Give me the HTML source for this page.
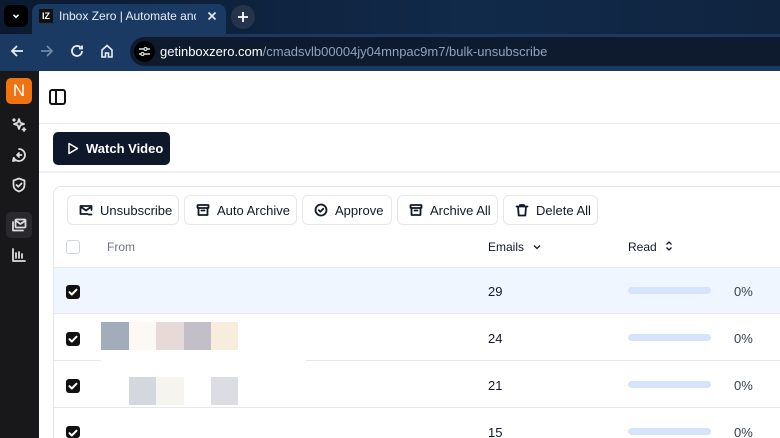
<!DOCTYPE html>
<html><head><meta charset="utf-8"><style>
*{box-sizing:border-box;margin:0;padding:0}
html,body{width:780px;height:438px;overflow:hidden}
body{font-family:"Liberation Sans",sans-serif;background:#fff;position:relative}
.abs{position:absolute}
.btn{position:absolute;top:195px;height:30px;border:1px solid #e5e7eb;border-radius:6px;font-size:13px;color:#111827;display:flex;align-items:center;padding-left:11px;gap:7px;background:#fff}
.btn svg{width:14px;height:14px;fill:none;stroke:#111827;stroke-width:1.8;stroke-linecap:round;stroke-linejoin:round}
.cb{position:absolute;left:66px;width:14px;height:14px;border-radius:3px;background:#111}
.row{position:absolute;left:54px;right:0;height:47px;border-bottom:1px solid #e5e7eb}
.num{position:absolute;left:488px;font-size:13px;color:#111827}
.bar{position:absolute;left:628px;width:83px;height:7px;border-radius:4px;background:#d6e4fb}
.pct{position:absolute;left:734px;font-size:13px;color:#374151}
.si{position:absolute;left:11px;width:16px;height:16px;fill:none;stroke:#ddd;stroke-width:1.8;stroke-linecap:round;stroke-linejoin:round}
</style></head><body>
<svg width="0" height="0" style="position:absolute"><defs><symbol id="ck" viewBox="0 0 14 14"><path d="M3.5 7.2l2.3 2.3 4.7-4.8" fill="none" stroke="#fff" stroke-width="2" stroke-linecap="round" stroke-linejoin="round"/></symbol></defs></svg>
<div class="abs" style="left:0;top:0;width:780px;height:34px;background:linear-gradient(90deg,#0b1a30,#112a4a 60%,#10243f)"></div>
<div class="abs" style="left:4px;top:5px;width:24px;height:22px;border-radius:6px;background:#000"></div>
<svg class="abs" style="left:11px;top:11px" width="10" height="10" viewBox="0 0 10 10"><path d="M2.5 3.8L5 6.3 7.5 3.8" fill="none" stroke="#fff" stroke-width="1.6"/></svg>
<div class="abs" style="left:32px;top:4px;width:194px;height:30px;background:#1a3a63;border-radius:8px 8px 0 0"></div>
<div class="abs" style="left:39px;top:9px;width:14px;height:14px;background:#111;color:#fff;font-size:9px;font-weight:bold;line-height:14px;text-align:center">IZ</div>
<div class="abs" style="left:59px;top:9px;font-size:12px;color:#e8eef7;width:137px;overflow:hidden;white-space:nowrap">Inbox Zero | Automate and clea</div>
<svg class="abs" style="left:207px;top:11px" width="10" height="10" viewBox="0 0 10 10"><path d="M1.5 1.5l7 7M8.5 1.5l-7 7" stroke="#e8eef7" stroke-width="1.6"/></svg>
<div class="abs" style="left:231px;top:5px;width:24px;height:24px;border-radius:12px;background:#25344a"></div>
<svg class="abs" style="left:237px;top:11px" width="12" height="12" viewBox="0 0 12 12"><path d="M6 1v10M1 6h10" stroke="#fff" stroke-width="1.8"/></svg>
<div class="abs" style="left:0;top:34px;width:780px;height:37px;background:#1a3a63"></div>
<svg class="abs" style="left:10px;top:44px" width="14" height="14" viewBox="0 0 14 14"><path d="M13 7H2M7 2L2 7l5 5" fill="none" stroke="#e8eef7" stroke-width="1.8"/></svg>
<svg class="abs" style="left:40px;top:44px" width="14" height="14" viewBox="0 0 14 14"><path d="M1 7h11M7 2l5 5-5 5" fill="none" stroke="#6f87a8" stroke-width="1.8"/></svg>
<svg class="abs" style="left:70px;top:44px" width="14" height="14" viewBox="0 0 14 14"><path d="M12 7a5 5 0 1 1-1.5-3.6M12 1.5V4.5H9" fill="none" stroke="#e8eef7" stroke-width="1.8"/></svg>
<svg class="abs" style="left:100px;top:44px" width="14" height="14" viewBox="0 0 14 14"><path d="M2 13V6l5-4.5L12 6v7H8.5V9h-3v4z" fill="none" stroke="#e8eef7" stroke-width="1.6"/></svg>
<div class="abs" style="left:130px;top:37px;width:650px;height:29px;border-radius:15px 0 0 15px;background:#0e1b2e"></div>
<div class="abs" style="left:134px;top:41px;width:21px;height:21px;border-radius:11px;background:#000"></div>
<svg class="abs" style="left:138px;top:45px" width="13" height="13" viewBox="0 0 13 13"><path d="M1 4h5M9 4h3M1 9h2M6 9h6" stroke="#ddd" stroke-width="1.4"/><circle cx="7.5" cy="4" r="1.5" fill="none" stroke="#ddd" stroke-width="1.3"/><circle cx="4.5" cy="9" r="1.5" fill="none" stroke="#ddd" stroke-width="1.3"/></svg>
<div class="abs" style="left:160px;top:44px;font-size:13px;color:#fff;white-space:nowrap">getinboxzero.com<span style="color:#8fa3bf">/cmadsvlb00004jy04mnpac9m7/bulk-unsubscribe</span></div>
<div class="abs" style="left:0;top:71px;width:39px;height:367px;background:#18181b"></div>
<div class="abs" style="left:6px;top:78px;width:26px;height:26px;border-radius:5px;background:#f07312;color:#fff;font-size:17px;text-align:center;line-height:26px">N</div>
<svg class="si" style="top:117px" viewBox="0 0 16 16"><path d="M8 2l1.3 3.7L13 7l-3.7 1.3L8 12 6.7 8.3 3 7l3.7-1.3zM13 11v3M11.5 12.5h3M3 2v2M2 3h2"/></svg>
<svg class="si" style="top:147px" viewBox="0 0 16 16"><path d="M8 2a6 6 0 1 1-5.3 8.8L2 14l3.2-.7A6 6 0 0 0 8 14"/><path d="M6 8l2-2M6 8l2 2M6 8h4.5"/></svg>
<svg class="si" style="top:177px" viewBox="0 0 16 16"><path d="M8 1.5l5.5 2v4.5c0 3.5-2.5 5.5-5.5 6.5C5 13.5 2.5 11.5 2.5 8V3.5z"/><path d="M5.5 8l1.8 1.8L10.5 6.5"/></svg>
<div class="abs" style="left:6px;top:212px;width:26px;height:26px;border-radius:5px;background:#2a2a2e"></div>
<svg class="si" style="top:217px" viewBox="0 0 16 16"><rect x="4.5" y="2.5" width="10" height="8" rx="1"/><path d="M4.5 3.5l5 3.5 5-3.5M2 5v8.5h10"/></svg>
<svg class="si" style="top:247px" viewBox="0 0 16 16"><path d="M2 2v12h12M5 11V6M8 11V5M11 11V7"/></svg>
<div class="abs" style="left:49px;top:89px;width:17px;height:16px;border:2px solid #111;border-radius:3px"></div>
<div class="abs" style="left:55px;top:89px;width:2px;height:16px;background:#111"></div>
<div class="abs" style="left:39px;top:123px;width:741px;height:1px;background:#e5e7eb"></div>
<div class="abs" style="left:53px;top:132px;width:117px;height:33px;border-radius:5px;background:#0f172a"></div>
<svg class="abs" style="left:67px;top:142px" width="12" height="13" viewBox="0 0 12 13"><path d="M2 1.5l8.5 5-8.5 5z" fill="none" stroke="#fff" stroke-width="1.5" stroke-linejoin="round"/></svg>
<div class="abs" style="left:86px;top:141px;color:#fff;font-size:13px;font-weight:bold">Watch Video</div>
<div class="abs" style="left:39px;top:171px;width:741px;height:2px;background:#eef0f3"></div>
<div class="abs" style="left:53px;top:186px;width:727px;height:252px;border:1px solid #e5e7eb;border-right:none;border-bottom:none;border-radius:8px 0 0 0"></div>
<div class="btn" style="left:67px;width:112px"><svg viewBox="0 0 14 14"><path d="M12.5 7V3H1.5v8h7M1.5 3.5L7 7.5l5.5-4M9.5 11.5h3"/></svg>Unsubscribe</div>
<div class="btn" style="left:184px;width:113px"><svg viewBox="0 0 14 14"><rect x="1.5" y="2" width="11" height="3" rx=".5"/><path d="M2.5 5v7h9V5M5.5 7.5h3"/></svg>Auto Archive</div>
<div class="btn" style="left:302px;width:90px"><svg viewBox="0 0 14 14"><circle cx="7" cy="7" r="5.5"/><path d="M4.8 7.2l1.5 1.5 3-3"/></svg>Approve</div>
<div class="btn" style="left:397px;width:101px"><svg viewBox="0 0 14 14"><rect x="1.5" y="2" width="11" height="3" rx=".5"/><path d="M2.5 5v7h9V5M5.5 7.5h3"/></svg>Archive All</div>
<div class="btn" style="left:503px;width:95px"><svg viewBox="0 0 14 14"><path d="M1.5 3.5h11M5 3.5V2h4v1.5M3 3.5l.7 9h6.6l.7-9"/></svg>Delete All</div>
<div class="abs" style="left:66px;top:240px;width:14px;height:14px;border:1px solid #d1d5db;border-radius:3px"></div>
<div class="abs" style="left:107px;top:240px;font-size:12px;color:#6b7280">From</div>
<div class="abs" style="left:488px;top:240px;font-size:12px;color:#111827">Emails</div>
<svg class="abs" style="left:532px;top:242px" width="10" height="10" viewBox="0 0 10 10"><path d="M2 3.5l3 3 3-3" fill="none" stroke="#111827" stroke-width="1.3"/></svg>
<div class="abs" style="left:628px;top:240px;font-size:12px;color:#111827">Read</div>
<svg class="abs" style="left:664px;top:240px" width="10" height="12" viewBox="0 0 10 12"><path d="M2.5 4.5L5 2l2.5 2.5M2.5 7.5L5 10l2.5-2.5" fill="none" stroke="#111827" stroke-width="1.3"/></svg>
<div class="row" style="top:267px;background:#eff6ff;border-top:1px solid #e5e7eb"></div>
<div class="row" style="top:314px"></div>
<div class="row" style="top:361px"></div>
<div class="row" style="top:408px;height:30px;border-bottom:none"></div>
<div class="cb" style="top:285px"><svg width="14" height="14"><use href="#ck"/></svg></div><div class="num" style="top:284px">29</div><div class="bar" style="top:287px"></div><div class="pct" style="top:284px">0%</div>
<div class="cb" style="top:332px"><svg width="14" height="14"><use href="#ck"/></svg></div><div class="num" style="top:331px">24</div><div class="bar" style="top:334px"></div><div class="pct" style="top:331px">0%</div>
<div class="cb" style="top:379px"><svg width="14" height="14"><use href="#ck"/></svg></div><div class="num" style="top:378px">21</div><div class="bar" style="top:381px"></div><div class="pct" style="top:378px">0%</div>
<div class="cb" style="top:426px;height:12px;overflow:hidden"><svg width="14" height="14"><use href="#ck"/></svg></div><div class="num" style="top:425px">15</div><div class="bar" style="top:428px"></div><div class="pct" style="top:425px">0%</div>
<div class="abs" style="left:101px;top:315px;width:205px;height:92px;background:#fff"></div>
<div class="abs" style="left:101px;top:322px;width:28px;height:28px;background:#a3acba"></div>
<div class="abs" style="left:129px;top:322px;width:27px;height:28px;background:#fcf8f4"></div>
<div class="abs" style="left:156px;top:322px;width:28px;height:28px;background:#e7d9d8"></div>
<div class="abs" style="left:184px;top:322px;width:27px;height:28px;background:#c2bfc9"></div>
<div class="abs" style="left:211px;top:322px;width:27px;height:28px;background:#f8ecdd"></div>
<div class="abs" style="left:129px;top:377px;width:27px;height:28px;background:#d4d8de"></div>
<div class="abs" style="left:156px;top:377px;width:28px;height:28px;background:#f6f4ef"></div>
<div class="abs" style="left:211px;top:377px;width:27px;height:28px;background:#dcdde2"></div>
</body></html>
